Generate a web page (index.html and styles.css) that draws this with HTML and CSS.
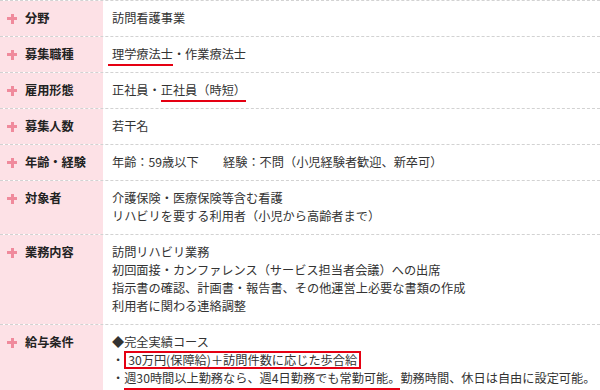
FILE: index.html
```html
<!DOCTYPE html>
<html lang="ja">
<head>
<meta charset="utf-8">
<link rel="stylesheet" href="styles.css">
</head>
<body>
<dl class="spec">
  <div class="row">
    <dt class="label"><span class="plus"></span>分野</dt>
    <dd class="value">訪問看護事業</dd>
  </div>
  <div class="row">
    <dt class="label"><span class="plus"></span>募集職種</dt>
    <dd class="value"><span class="ul ul-lead">理学療法士</span>・作業療法士</dd>
  </div>
  <div class="row">
    <dt class="label"><span class="plus"></span>雇用形態</dt>
    <dd class="value">正社員・<span class="ul">正社員（時短）</span></dd>
  </div>
  <div class="row">
    <dt class="label"><span class="plus"></span>募集人数</dt>
    <dd class="value">若干名</dd>
  </div>
  <div class="row">
    <dt class="label"><span class="plus"></span>年齢・経験</dt>
    <dd class="value">年齢：59歳以下　　経験：不問（小児経験者歓迎、新卒可）</dd>
  </div>
  <div class="row">
    <dt class="label"><span class="plus"></span>対象者</dt>
    <dd class="value">介護保険・医療保険等含む看護<br>リハビリを要する利用者（小児から高齢者まで）</dd>
  </div>
  <div class="row">
    <dt class="label"><span class="plus"></span>業務内容</dt>
    <dd class="value">訪問リハビリ業務<br>初回面接・カンファレンス（サービス担当者会議）への出席<br>指示書の確認、計画書・報告書、その他運営上必要な書類の作成<br>利用者に関わる連絡調整</dd>
  </div>
  <div class="row">
    <dt class="label"><span class="plus"></span>給与条件</dt>
    <dd class="value">◆完全実績コース<br>・<span class="box">30万円(保障給)＋訪問件数に応じた歩合給</span><br>・<span class="ul">週30時間以上勤務なら、週4日勤務でも常勤可能。</span>勤務時間、休日は自由に設定可能。</dd>
  </div>
</dl>
</body>
</html>
```

FILE: styles.css
```css
html, body {
  margin: 0;
  padding: 0;
  background: #fff;
}
body {
  font-family: "Noto Sans CJK JP", "Noto Sans", sans-serif;
  font-size: 12.2px;
  line-height: 18px;
  color: #333;
}
.spec {
  margin: 0;
  border-top: 1px dashed #d2d2d2;
}
.row {
  display: flex;
  border-bottom: 1px dashed #d2d2d2;
}
.label {
  width: 103px;
  flex: none;
  box-sizing: border-box;
  background: #fde1e6;
  padding: 8px 0 9px 7px;
  font-weight: bold;
  color: #222;
  display: flex;
  align-items: flex-start;
}
.plus {
  position: relative;
  width: 10px;
  height: 18px;
  margin-right: 8px;
  flex: none;
}
.plus::before,
.plus::after {
  content: "";
  position: absolute;
  background: #f08a9c;
}
.plus::before {
  left: 0;
  top: 8px;
  width: 10px;
  height: 3px;
}
.plus::after {
  left: 3.5px;
  top: 4.5px;
  width: 3px;
  height: 10px;
}
.value {
  margin: 0;
  flex: 1;
  padding: 8px 0 9px 9px;
  white-space: nowrap;
}
.ul {
  border-bottom: 2px solid #e50012;
  padding-bottom: 1px;
}
.ul-lead {
  margin-left: -4px;
  padding-left: 4px;
}
.box {
  display: inline-block;
  border: 2px solid #e50012;
  line-height: 14px;
  padding: 0 2px;
  vertical-align: top;
}
```
